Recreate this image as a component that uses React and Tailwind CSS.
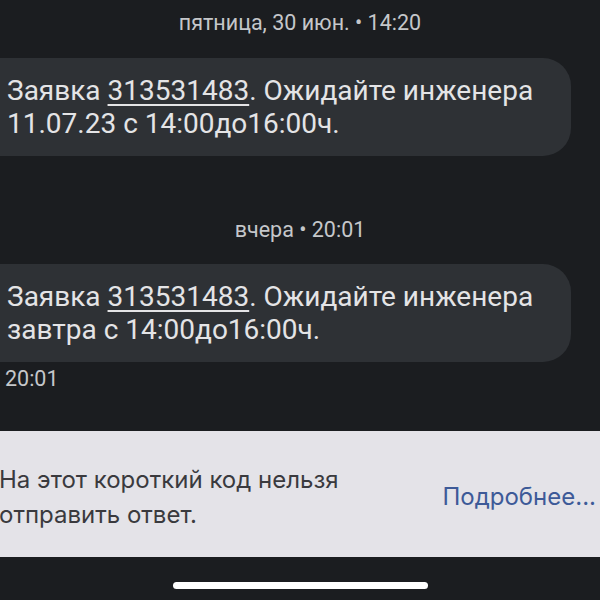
import React from 'react';

function Bubble({ children }) {
  return (
    <div className="ml-[-30px] w-[601px] rounded-[28px] bg-[#2e3135] pl-[37px] pr-4 py-[16px] text-[28px] leading-[33px] text-[#e4e4e6]">
      {children}
    </div>
  );
}

export default function App() {
  return (
    <div className="w-[600px] h-[600px] overflow-hidden bg-[#1b1d20] flex flex-col font-['Roboto',sans-serif]">
      <div className="pt-[11px] text-center text-[21.5px] leading-[24px] text-[#c5c7ca]">пятница, 30 июн. • 14:20</div>
      <div className="mt-[23px]">
        <Bubble>
          Заявка <span className="underline underline-offset-[4px] decoration-[1.5px]">313531483</span>. Ожидайте инженера
          <br />
          11.07.23 с 14:00до16:00ч.
        </Bubble>
      </div>
      <div className="mt-[62px] text-center text-[21.5px] leading-[24px] text-[#c5c7ca]">вчера • 20:01</div>
      <div className="mt-[22px]">
        <Bubble>
          Заявка <span className="underline underline-offset-[4px] decoration-[1.5px]">313531483</span>. Ожидайте инженера
          <br />
          завтра с 14:00до16:00ч.
        </Bubble>
      </div>
      <div className="pl-[5px] mt-[5px] text-[21.5px] leading-[24px] text-[#c5c7ca]">20:01</div>
      <div className="mt-[40px] h-[126px] pt-[6px] bg-[#e4e3e8] flex items-center justify-between pr-[4px] font-['Inter','Liberation_Sans',sans-serif]">
        <div className="ml-[-1px] text-[24px] leading-[35px] text-[#3a3a3e]">
          На этот короткий код нельзя
          <br />
          отправить ответ.
        </div>
        <div className="text-[24px] text-[#3d5a98]">Подробнее...</div>
      </div>
      <div className="flex-1 flex items-center justify-center">
        <div className="w-[255px] h-[7px] rounded-full bg-white mt-[13px]"></div>
      </div>
    </div>
  );
}
